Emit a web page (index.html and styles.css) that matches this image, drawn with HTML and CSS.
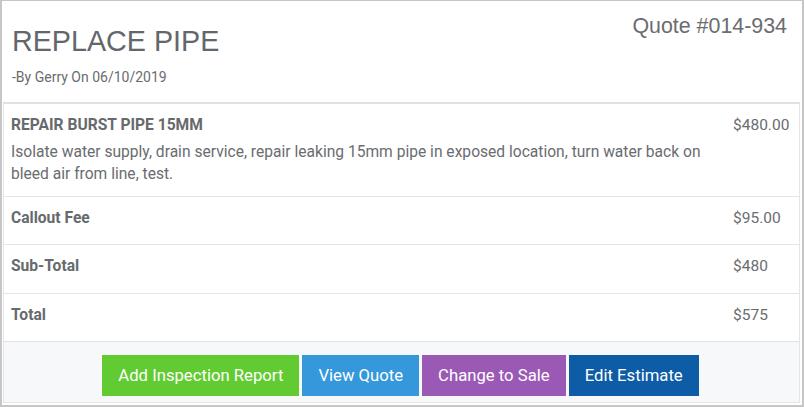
FILE: index.html
```html
<!DOCTYPE html>
<html lang="en">
<head>
<meta charset="utf-8">
<title>Replace Pipe</title>
<link rel="stylesheet" href="styles.css">
</head>
<body>
<div class="card">
  <header class="head">
    <div class="head-left">
      <h1 class="title">REPLACE PIPE</h1>
      <div class="byline">-By Gerry On 06/10/2019</div>
    </div>
    <div class="quote-no">Quote #014-934</div>
  </header>
  <section class="items">
    <div class="row row-first">
      <div class="label-col">
        <div class="label">REPAIR BURST PIPE 15MM</div>
        <div class="desc">Isolate water supply, drain service, repair leaking 15mm pipe in exposed location, turn water back on bleed air from line, test.</div>
      </div>
      <div class="value">$480.00</div>
    </div>
    <div class="row">
      <div class="label-col"><div class="label">Callout Fee</div></div>
      <div class="value">$95.00</div>
    </div>
    <div class="row row-tall">
      <div class="label-col"><div class="label">Sub-Total</div></div>
      <div class="value">$480</div>
    </div>
    <div class="row">
      <div class="label-col"><div class="label">Total</div></div>
      <div class="value">$575</div>
    </div>
    <div class="actions">
      <button class="btn btn-green">Add Inspection Report</button>
      <button class="btn btn-blue">View Quote</button>
      <button class="btn btn-purple">Change to Sale</button>
      <button class="btn btn-navy">Edit Estimate</button>
    </div>
  </section>
</div>
</body>
</html>
```
FILE: styles.css
```css
* { box-sizing: border-box; }
html, body { margin: 0; padding: 0; background: #fff; }
body { font-family: Roboto, "Liberation Sans", sans-serif; color: #6a6c6f; }

.card {
  width: 804px;
  height: 407px;
  border-style: solid;
  border-color: #c6c6c6;
  border-width: 1px 2px 2px 2px;
  padding: 0 2px 2px 1px;
  display: flex;
  flex-direction: column;
}

.head {
  height: 101px;
  display: flex;
  justify-content: space-between;
  align-items: flex-start;
}
.head-left { padding: 24px 0 0 9px; }
.title {
  margin: 0;
  font-family: "Liberation Sans", Arial, sans-serif;
  font-weight: 400;
  font-size: 28.7px;
  line-height: 32px;
  color: #63666b;
}
.byline {
  margin-top: 10px;
  font-size: 14px;
  line-height: 20px;
  color: #6a6c6f;
}
.quote-no {
  padding: 13px 13px 0 0;
  font-family: "Liberation Sans", Arial, sans-serif;
  font-size: 21.4px;
  line-height: 24px;
  color: #6a6c6f;
}

.items {
  flex: 1;
  border: 1px solid #e4e5e7;
  border-top: 2px solid #e0e1e3;
  display: flex;
  flex-direction: column;
}
.row {
  display: flex;
  border-bottom: 1px solid #e4e5e7;
  padding: 11px 8px 0 7px;
  height: 48px;
}
.row-tall { height: 49px; }
.row-first { height: 93px; }
.label-col { flex: 1; }
.label {
  font-weight: 700;
  font-size: 15.6px;
  line-height: 20px;
  color: #676a6c;
}
.desc {
  margin-top: 6px;
  font-size: 15.6px;
  line-height: 22px;
  color: #6a6c6f;
}
.value {
  width: 58px;
  font-size: 15.5px;
  line-height: 20px;
  color: #6a6c6f;
}

.actions {
  flex: 1;
  background: #f7f8fa;
  border-top: 1px solid #e0e1e3;
  margin-top: -1px;
  display: flex;
  justify-content: center;
  align-items: flex-start;
  gap: 3px;
  padding: 13px 2px 0 0;
}
.btn {
  height: 41px;
  border: 0;
  margin: 0;
  padding: 0 16px;
  font-family: Roboto, sans-serif;
  font-size: 16.7px;
  color: #fff;
  cursor: pointer;
}
.btn-green { background: #62cb31; }
.btn-blue { background: #3498db; }
.btn-purple { background: #9b59b6; }
.btn-navy { background: #0e5ca6; }
```
